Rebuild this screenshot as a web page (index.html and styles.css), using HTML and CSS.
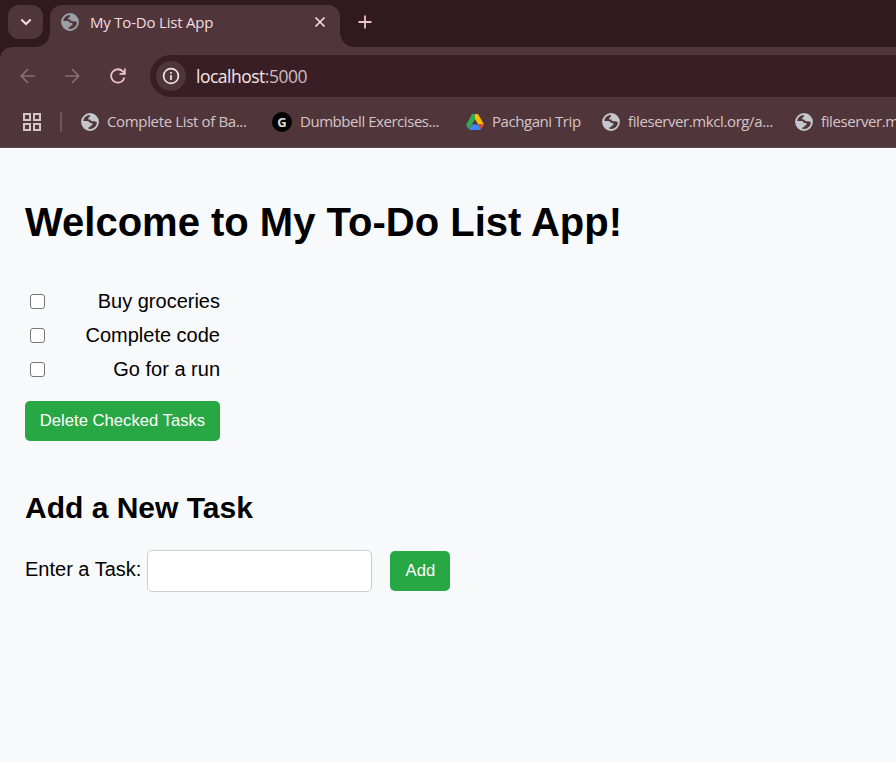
FILE: index.html
```html
<!DOCTYPE html>
<html lang="en">
<head>
<meta charset="utf-8">
<title>My To-Do List App</title>
<link rel="stylesheet" href="styles.css">
</head>
<body>
<svg width="0" height="0" class="defs">
  <symbol id="globe" viewBox="0 0 18 18">
    <circle cx="9" cy="9" r="7.9" fill="none" stroke="currentColor" stroke-width="2"/>
    <path fill="currentColor" d="M9 1H13L17 6V9.5C15.5 9.5 14.5 8.3 13.1 8.3H10.4L9.2 6.6H7.2V5L9 3.6ZM1 8H6.5C8 8 8.5 9 9 10H11.3V12.2L9.3 12.7V14L7.3 14.5V17L3 15Z"/>
  </symbol>
</svg>
<header class="browser">
  <div class="tabstrip">
    <div class="tab-search"><svg width="12" height="8" viewBox="0 0 12 8"><path d="M1.3 1.5L6 6L10.7 1.5" stroke-width="2"/></svg></div>
    <div class="tab">
      <svg class="globe"><use href="#globe"/></svg>
      <span class="tab-title">My To-Do List App</span>
      <svg class="close" width="12" height="12" viewBox="0 0 12 12"><path d="M1.5 1.5L10.5 10.5M10.5 1.5L1.5 10.5" stroke-width="1.7"/></svg>
    </div>
    <svg class="plus" width="14" height="14" viewBox="0 0 14 14"><path d="M7 .5V13.5M.5 7H13.5" stroke-width="1.8"/></svg>
  </div>
  <div class="toolbar">
    <svg class="nav dim" viewBox="0 0 16 16"><path d="M15 8H1.5M8 1L1.3 8L8 15" stroke-width="1.7"/></svg>
    <svg class="nav dim" viewBox="0 0 16 16"><path d="M1 8H14.5M8 1L14.7 8L8 15" stroke-width="1.7"/></svg>
    <svg class="nav pink" viewBox="0 0 16 16"><path d="M14.4 9.5A6.7 6.7 0 1 1 12.8 3.4L14.2 5M14.8 .5V5.8H9.5" stroke-width="1.8"/></svg>
    <div class="omnibox">
      <div class="info"><svg width="18" height="18" viewBox="0 0 18 18"><circle cx="9" cy="9" r="7.4" stroke-width="1.7"/><path d="M9 8V13M9 5V6.7" stroke-width="1.7"/></svg></div>
      <span class="url">localhost<span>:5000</span></span>
    </div>
  </div>
  <nav class="bookmarks">
    <svg class="apps" width="18" height="18" viewBox="0 0 18 18"><path d="M1 1H7V7H1ZM11 1H17V7H11ZM1 11H7V17H1ZM11 11H17V17H11Z" stroke-width="2"/></svg>
    <i class="divider"></i>
    <a class="bm b1"><svg class="globe"><use href="#globe"/></svg><span>Complete List of Ba...</span></a>
    <a class="bm b2"><b class="g-icon">G</b><span>Dumbbell Exercises...</span></a>
    <a class="bm b3"><svg class="drive" width="18" height="16" viewBox="0 0 18 16"><path fill="#34a853" d="M6 0H9L11.8 5L9 5.2L3 15.5L0 11Z"/><path fill="#fbbc04" d="M9 0H12L18 10.5H12.2L9 5Z"/><path fill="#ea4335" d="M12.2 10.5H18L15 15.5Z"/><path fill="#4285f4" d="M6 10.5H12.2L15 16H3Z"/></svg><span>Pachgani Trip</span></a>
    <a class="bm b4"><svg class="globe"><use href="#globe"/></svg><span>fileserver.mkcl.org/a...</span></a>
    <a class="bm b5"><svg class="globe"><use href="#globe"/></svg><span>fileserver.m</span></a>
  </nav>
</header>
<main>
  <h1>Welcome to My To-Do List App!</h1>
  <form class="tasks">
    <label><input type="checkbox"><span>Buy groceries</span></label>
    <label><input type="checkbox"><span>Complete code</span></label>
    <label><input type="checkbox"><span>Go for a run</span></label>
    <button type="button" class="delete">Delete Checked Tasks</button>
  </form>
  <h2>Add a New Task</h2>
  <form class="add">
    <label for="task">Enter a Task:</label>
    <input id="task" type="text">
    <button type="button">Add</button>
  </form>
</main>
</body>
</html>
```
FILE: styles.css
```css
* { box-sizing: border-box; }
body { margin: 0; height: 762px; overflow: hidden; background: #f8f9fb; color: #000; font: 20px/24px "Liberation Sans", Arial, sans-serif; }
svg { flex: none; display: block; fill: none; stroke: currentColor; }
.defs { position: absolute; }
.browser { height: 148px; background: #50353a; border-bottom: 1px solid #5f464b; overflow: hidden; font-family: "Open Sans", "Noto Sans", sans-serif; white-space: nowrap; }
.tabstrip { height: 47px; background: #30191f; display: flex; padding: 5px 0 0 8px; color: #f3dde1; }
.tab-search { width: 35px; height: 34px; border-radius: 11px; background: #50353a; display: flex; align-items: center; justify-content: center; }
.tab { position: relative; width: 290px; height: 42px; margin-left: 7px; padding: 0 14px 8px 11px; border-radius: 12px 12px 0 0; background: #50353a; display: flex; align-items: center; }
.tab::before, .tab::after { content: ""; position: absolute; bottom: 0; width: 14px; height: 14px; }
.tab::before { left: -14px; background: radial-gradient(circle at 0 0, transparent 13.5px, #50353a 14px); }
.tab::after { right: -14px; background: radial-gradient(circle at 100% 0, transparent 13.5px, #50353a 14px); }
.globe { width: 18px; height: 18px; color: #c4c7cb; stroke: none; }
.tab .globe { color: #9aa0a6; }
.tab-title { font-size: 15px; letter-spacing: -.2px; margin: -1px auto 0 11px; }
.plus { margin: 10px 0 0 18px; color: #edc3cb; }
.toolbar { height: 50px; display: flex; align-items: center; padding: 8px 0 0 20px; background: radial-gradient(circle at 12px 12px, #50353a 11.5px, #30191f 12px) 0 0 / 12px 12px no-repeat; }
.nav { width: 16px; height: 16px; margin-right: 28px; }
.dim { color: #8b6d73; }
.nav.pink { color: #edc3cb; margin: 0 24px 0 2px; }
.omnibox { flex: 1; height: 42px; border-radius: 21px 0 0 21px; background: #391f25; display: flex; align-items: center; padding-left: 6px; color: #f3e6e8; }
.info { width: 30px; height: 30px; border-radius: 50%; background: #50353a; display: flex; align-items: center; justify-content: center; }
.url { font-size: 17.5px; letter-spacing: -.5px; margin-left: 10px; }
.url span { color: #cdbcc0; }
.bookmarks { height: 50px; display: flex; align-items: center; padding-left: 23px; color: #d6c5c8; font-size: 15px; }
.divider { flex: none; width: 2px; height: 20px; margin: 0 19px 0 19px; border-radius: 1px; background: #745359; }
.bm { flex: none; display: flex; align-items: center; }
.bm span { margin: -2px 0 0 8px; letter-spacing: -.4px; }
.b1 { width: 191px; }
.b1 span { letter-spacing: -.35px; }
.b2 { width: 194px; }
.b2 span { letter-spacing: -.45px; }
.b3 { width: 136px; }
.b3 span { letter-spacing: -.45px; }
.b4 { width: 193px; }
.g-icon { width: 20px; height: 20px; border-radius: 50%; background: #000; color: #ddd; font: bold 13px/20px "Open Sans", sans-serif; text-align: center; }
.drive { stroke: none; }
main { padding: 50px 25px 0; }
h1 { margin: 0; font-size: 40px; line-height: 48px; }
.tasks { width: 195px; margin-top: 38px; }
.tasks label { display: flex; justify-content: space-between; align-items: center; height: 34px; }
input[type=checkbox] { appearance: none; width: 15px; height: 15px; margin: 0 0 0 5px; border: 1px solid #767676; border-radius: 3px; background: #fff; }
button { height: 40px; border: 0; border-radius: 5px; padding: 0; background: #28a745; color: #fff; font: 16.67px/20px "Liberation Sans", Arial, sans-serif; }
.delete { width: 195px; margin-top: 15px; display: block; }
h2 { margin: 49px 0 0; font-size: 30px; line-height: 36px; }
.add { display: flex; align-items: center; margin-top: 24px; }
.add label { margin-top: -4px; }
.add input { width: 225px; height: 42px; margin: 0 18px 0 6px; border: 1px solid #ccc; border-radius: 5px; background: #fff; }
.add button { width: 60px; }
```
